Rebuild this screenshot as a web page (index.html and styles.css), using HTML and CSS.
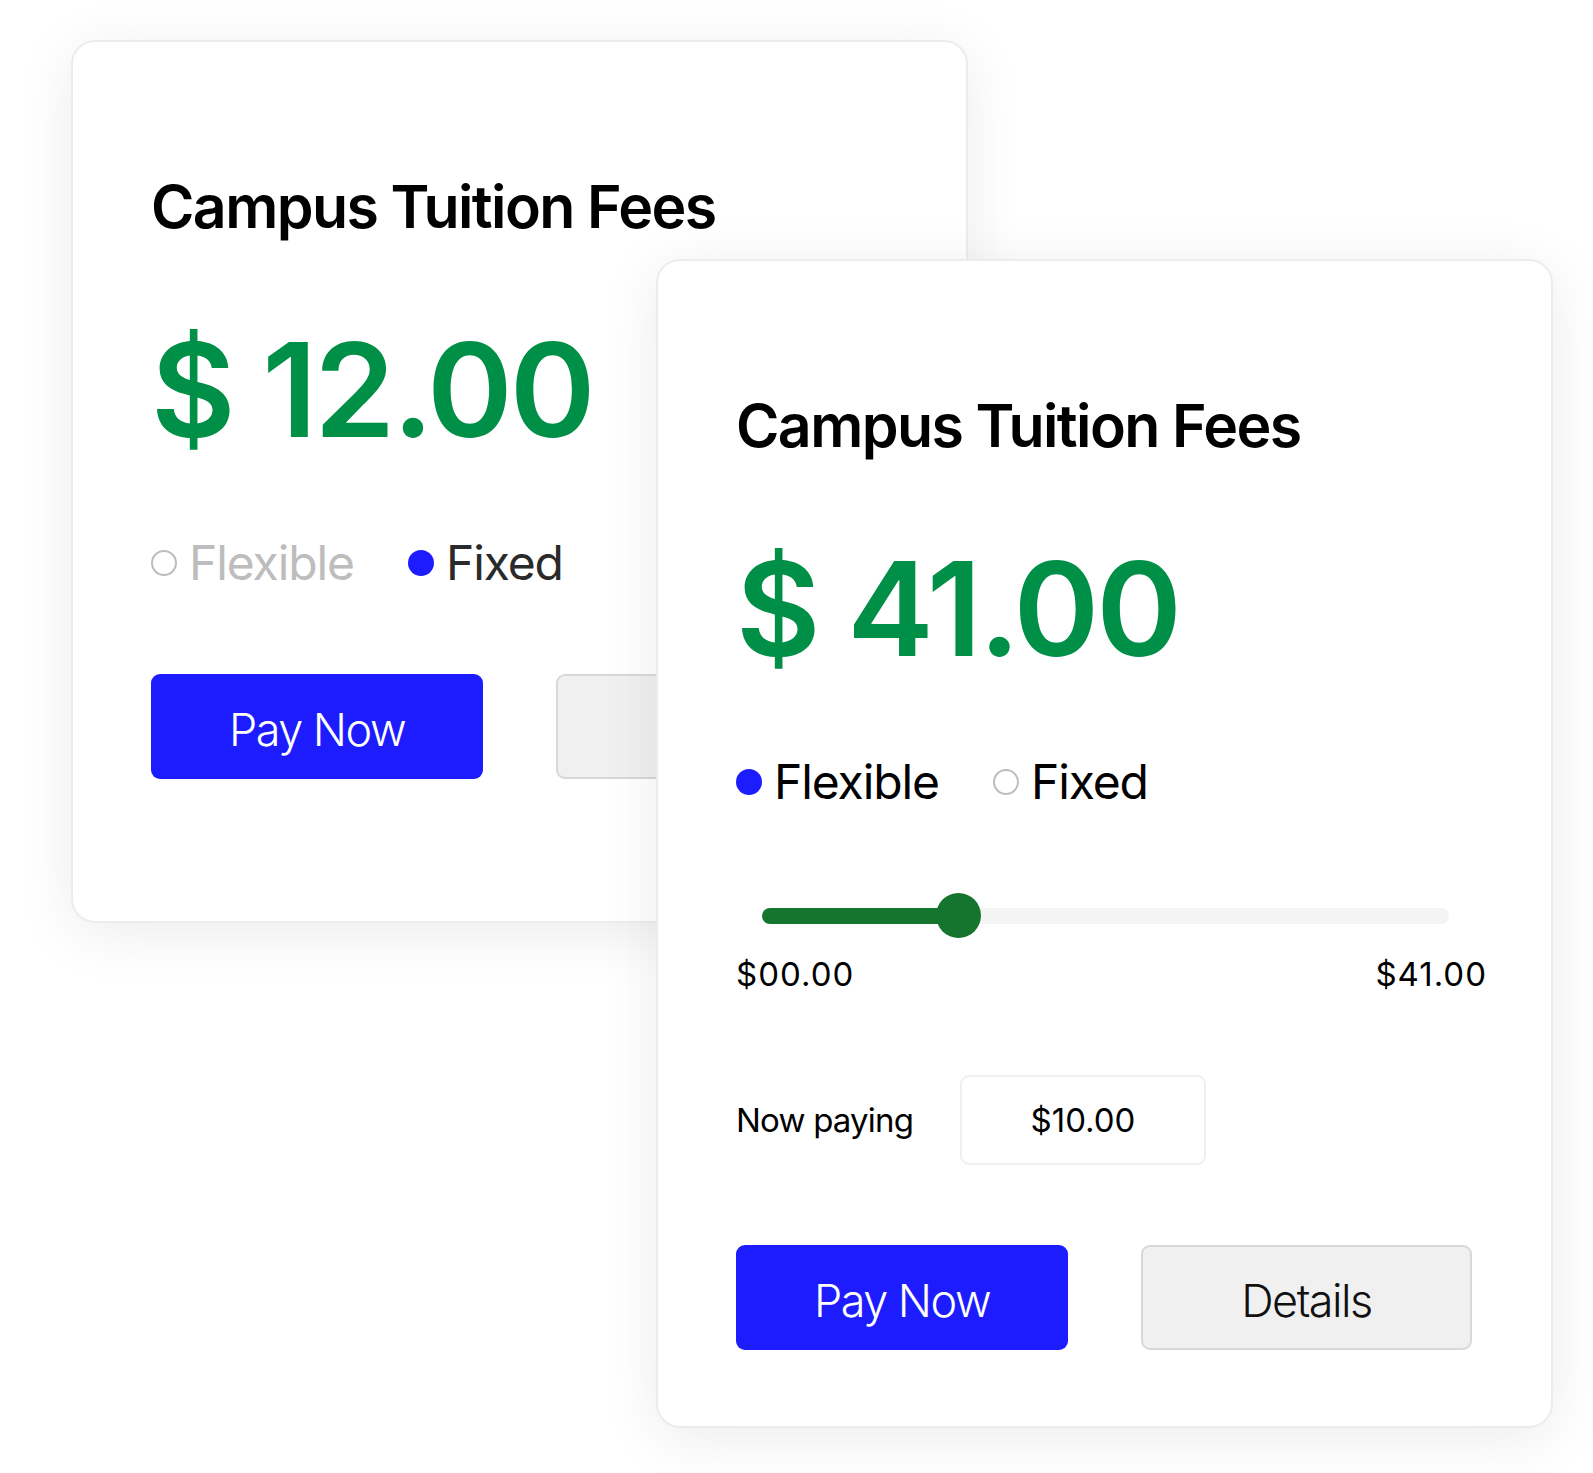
FILE: index.html
```html
<!DOCTYPE html>
<html lang="en">
<head>
    <meta charset="UTF-8">
    <meta name="viewport" content="width=device-width, initial-scale=1.0">
    <title>Campus Tuition Fees</title>
    <link rel="stylesheet" href="styles.css">
</head>
<body>

    <div class="stage">
        <!-- fixed plan card, sits behind -->
        <div class="card card-back">
            <h2 class="card-title">Campus Tuition Fees</h2>
            <div class="price">$ 12.00</div>
            <div class="plan">
                <span class="plan-option off"><span class="dot"></span>Flexible</span>
                <span class="plan-option on"><span class="dot"></span>Fixed</span>
            </div>
            <div class="actions">
                <button class="btn btn-pay" type="button">Pay Now</button>
                <button class="btn btn-details" type="button">Details</button>
            </div>
        </div>

        <!-- flexible plan card, on top -->
        <div class="card card-front">
            <h2 class="card-title">Campus Tuition Fees</h2>
            <div class="price">$ 41.00</div>
            <div class="plan">
                <span class="plan-option on"><span class="dot"></span>Flexible</span>
                <span class="plan-option off"><span class="dot"></span>Fixed</span>
            </div>

            <div class="slider">
                <div class="track">
                    <div class="fill" style="width: 28.6%"></div>
                </div>
                <div class="thumb" style="left: 28.6%"></div>
            </div>
            <div class="range-labels">
                <span>$00.00</span>
                <span>$41.00</span>
            </div>

            <div class="paying">
                <span class="paying-label">Now paying</span>
                <div class="amount-box">$10.00</div>
            </div>

            <div class="actions">
                <button class="btn btn-pay" type="button">Pay Now</button>
                <button class="btn btn-details" type="button">Details</button>
            </div>
        </div>
    </div>

</body>
</html>
```

FILE: styles.css
```css
* {
    box-sizing: border-box;
}

body {
    margin: 0;
    background: #fff;
    font-family: Inter, "Open Sans", sans-serif;
    color: #000;
}

.stage {
    position: relative;
    width: 1593px;
    height: 1473px;
    padding: 40px 0 0 71px;
    overflow: hidden;
}

.card {
    width: 897px;
    background: #fff;
    border: 2px solid #ececec;
    border-radius: 24px;
    box-shadow: 0 10px 60px rgba(0, 0, 0, 0.08);
    padding: 135px 64px 0 78px;
}

.card-back {
    height: 883px;
}

/* the front card overlaps the back one */
.card-front {
    position: absolute;
    left: 656px;
    top: 259px;
    padding-bottom: 76px;
}

.card-title {
    margin: 0;
    font-size: 59px;
    line-height: 60px;
    font-weight: 600;
    letter-spacing: -1.6px;
}

.price {
    margin-top: 88px;
    font-size: 130px;
    line-height: 130px;
    font-weight: 600;
    letter-spacing: -3px;
    color: #008f46;
}

.plan {
    margin-top: 84px;
    display: flex;
    align-items: center;
    gap: 54px;
    height: 48px;
    font-size: 48px;
    line-height: 48px;
    letter-spacing: -1.1px;
}

.plan-option {
    display: flex;
    align-items: center;
    gap: 12px;
}

.dot {
    width: 26px;
    height: 26px;
    border-radius: 50%;
}

.on .dot {
    background: #1c1cff;
}

.off .dot {
    border: 2.5px solid #bdbdbd;
}

.card-back .on {
    color: #2a2a2a;
}

.card-back .off {
    color: #bdbdbd;
}

.actions {
    margin-top: 87px;
    display: flex;
    gap: 73px;
}

.btn {
    width: 332px;
    height: 105px;
    padding: 5px 0 0;
    border-radius: 9px;
    font-family: inherit;
    font-size: 45px;
    font-weight: 300;
    letter-spacing: -1.5px;
    cursor: pointer;
}

.btn-pay {
    background: #1c1cff;
    border: none;
    color: #fff;
}

.btn-details {
    background: #f0f0f0;
    border: 2px solid #d8d8d8;
    color: #111;
}

.slider {
    position: relative;
    height: 45px;
    margin: 87px 38px 0 26px;
    display: flex;
    align-items: center;
}

.track {
    width: 100%;
    height: 16px;
    background: #f4f4f4;
    border-radius: 8px;
}

.fill {
    height: 100%;
    background: #15752f;
    border-radius: 8px;
}

.thumb {
    position: absolute;
    top: 0;
    width: 45px;
    height: 45px;
    margin-left: -22px;
    border-radius: 50%;
    background: #15752f;
}

.range-labels {
    margin-top: 20px;
    display: flex;
    justify-content: space-between;
    font-size: 33px;
    line-height: 32px;
    letter-spacing: 1px;
}

.paying {
    margin-top: 85px;
    display: flex;
    align-items: center;
    height: 90px;
    font-size: 33px;
}

.paying-label {
    width: 224px;
    letter-spacing: -0.8px;
}

.amount-box {
    width: 246px;
    height: 90px;
    border: 2px solid #efefef;
    border-radius: 9px;
    display: flex;
    align-items: center;
    justify-content: center;
}

.card-front .actions {
    margin-top: 80px;
}

.card-front .btn-details {
    width: 331px;
}
```
